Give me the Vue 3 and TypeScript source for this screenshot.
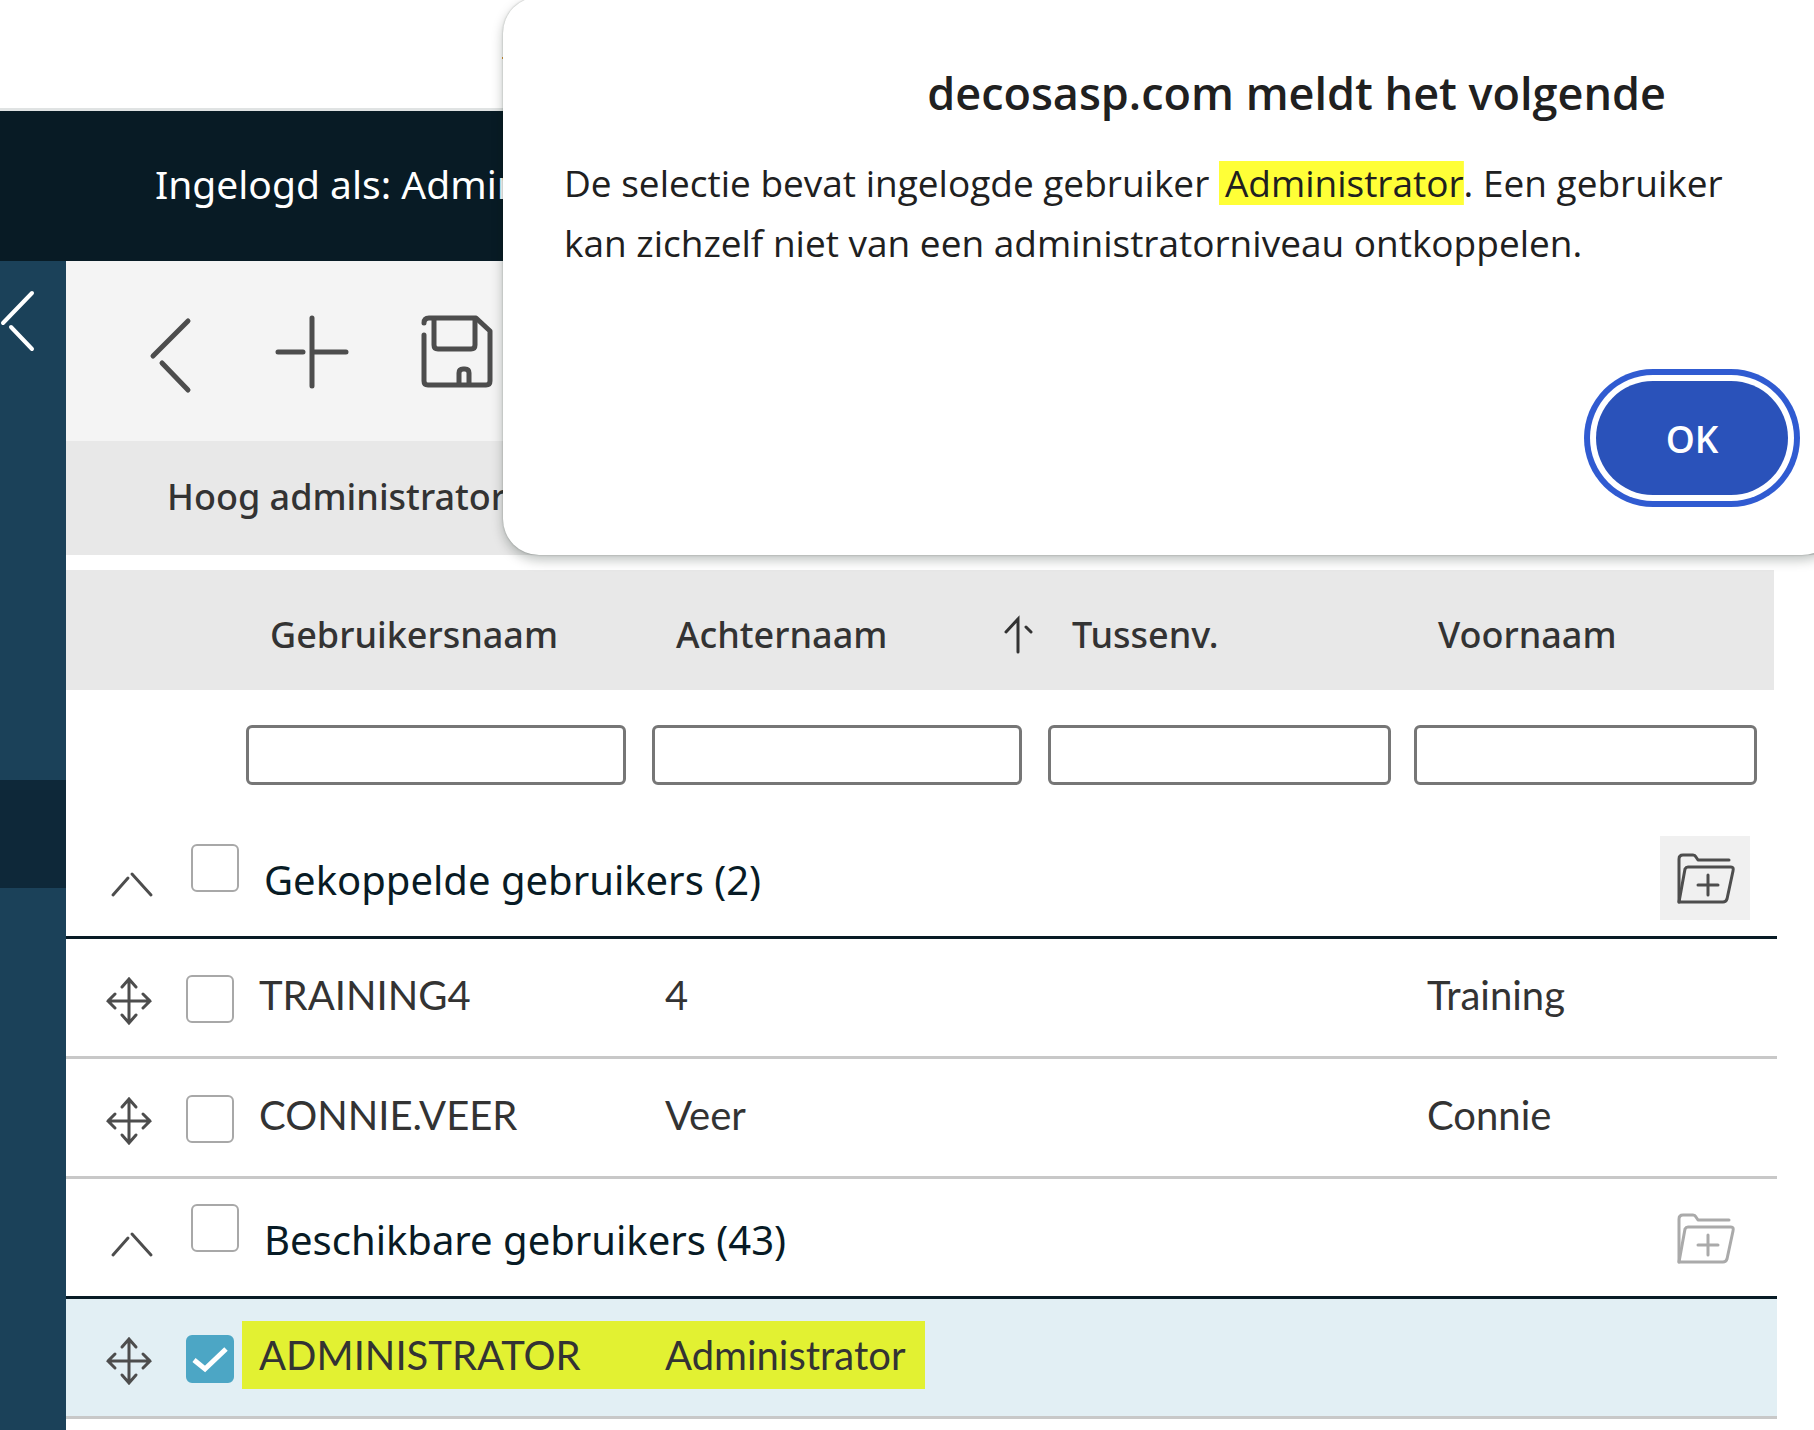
<script setup lang="ts">
import { reactive, ref } from 'vue'

interface User {
  login: string
  last: string
  infix: string
  first: string
  selected: boolean
}

interface Group {
  id: string
  title: string
  count: number
  open: boolean
  selected: boolean
  canLink: boolean
  users: User[]
}

const columns = [
  { key: 'login', label: 'Gebruikersnaam', sorted: false },
  { key: 'last', label: 'Achternaam', sorted: true },
  { key: 'infix', label: 'Tussenv.', sorted: false },
  { key: 'first', label: 'Voornaam', sorted: false },
]

const filters = reactive<Record<string, string>>({ login: '', last: '', infix: '', first: '' })

const groups = reactive<Group[]>([
  {
    id: 'linked',
    title: 'Gekoppelde gebruikers',
    count: 2,
    open: true,
    selected: false,
    canLink: true,
    users: [
      { login: 'TRAINING4', last: '4', infix: '', first: 'Training', selected: false },
      { login: 'CONNIE.VEER', last: 'Veer', infix: '', first: 'Connie', selected: false },
    ],
  },
  {
    id: 'available',
    title: 'Beschikbare gebruikers',
    count: 43,
    open: true,
    selected: false,
    canLink: false,
    users: [
      { login: 'ADMINISTRATOR', last: 'Administrator', infix: '', first: '', selected: true },
    ],
  },
])

const dialogOpen = ref(true)
</script>

<template>
  <div class="page">
    <header class="brand"><span class="brand-mark"></span></header>
    <div class="session">Ingelogd als: Admin</div>

    <div class="body">
      <nav class="sidebar" aria-label="Menu">
        <button class="collapse" type="button" aria-label="Menu inklappen">
          <svg width="40" height="64" viewBox="0 0 40 64" fill="none" stroke="#fff" stroke-width="4" stroke-linecap="round">
            <path d="M32 4 3 34M11 38l21 22" />
          </svg>
        </button>
        <a class="nav-active" href="#" aria-label="Gebruikers"></a>
      </nav>

      <main class="main">
        <div class="toolbar">
          <button type="button" aria-label="Terug">
            <svg width="50" height="80" viewBox="0 0 50 80" fill="none" stroke="#4d4d4d" stroke-width="5" stroke-linecap="round">
              <path d="M39 6 4 41M13 48l26 27" />
            </svg>
          </button>
          <button type="button" aria-label="Toevoegen">
            <svg width="70" height="80" viewBox="0 0 70 80" fill="none" stroke="#4d4d4d" stroke-width="5" stroke-linecap="round">
              <path d="M37 3v68M3 37h25M39 37h32" />
            </svg>
          </button>
          <button type="button" aria-label="Opslaan">
            <svg width="74" height="80" viewBox="0 0 74 80" fill="none" stroke="#4d4d4d" stroke-width="5" stroke-linecap="round" stroke-linejoin="round">
              <path d="M3 8q0-5 5-5h47l14 13v50q0 4-4 4H7q-4 0-4-4V20" />
              <path d="M13 4v26q0 4 4 4h33q4 0 4-4V4M38 69V58q0-4 4-4h2q4 0 4 4v11" />
            </svg>
          </button>
        </div>

        <h1 class="level">Hoog administrator</h1>

        <table class="users">
          <colgroup>
            <col class="c-lead" />
            <col class="c-login" />
            <col class="c-last" />
            <col class="c-infix" />
            <col />
          </colgroup>
          <thead>
            <tr>
              <th></th>
              <th v-for="c in columns" :key="c.key" scope="col" :aria-sort="c.sorted ? 'ascending' : undefined">
                <div class="head">
                  <span>{{ c.label }}</span>
                  <svg v-if="c.sorted" width="30" height="38" viewBox="0 0 30 38" fill="none" stroke="#333" stroke-width="3" stroke-linecap="round">
                    <path d="M15 37V4L3 17M23 12l5 5" />
                  </svg>
                </div>
              </th>
            </tr>
            <tr class="filters">
              <td></td>
              <td v-for="c in columns" :key="c.key">
                <input v-model="filters[c.key]" type="text" :aria-label="'Filter ' + c.label" />
              </td>
            </tr>
          </thead>
          <tbody v-for="g in groups" :key="g.id">
            <tr class="group">
              <th colspan="5" scope="rowgroup">
                <div class="group-bar">
                  <button class="fold" type="button" aria-label="In- of uitklappen" @click="g.open = !g.open">
                    <svg width="40" height="26" viewBox="0 0 40 26" fill="none" stroke="#4d4d4d" stroke-width="3" stroke-linecap="round">
                      <path d="M1 24 16 7M20 3l19 21" />
                    </svg>
                  </button>
                  <input :id="g.id" v-model="g.selected" class="box" type="checkbox" />
                  <label :for="g.id">{{ g.title }} ({{ g.count }})</label>
                  <button class="link" :class="{ ready: g.canLink }" type="button" aria-label="Koppelen">
                    <svg width="60" height="50" viewBox="0 0 60 50" fill="none" stroke="currentColor" stroke-width="3" stroke-linecap="round" stroke-linejoin="round">
                      <path d="M4 49V6q0-4 4-4h10q2 0 3 2l2 3h31" />
                      <path d="M4 49 10 16q1-2 3-2h43q3 0 2 4l-6 28q-1 3-4 3zM33 22v20M23 32h20" />
                    </svg>
                  </button>
                </div>
              </th>
            </tr>
            <template v-if="g.open">
              <tr v-for="u in g.users" :key="u.login" class="user" :class="{ selected: u.selected }">
                <td>
                  <div class="lead">
                    <svg width="44" height="52" viewBox="0 0 44 52" fill="none" stroke="#4d4d4d" stroke-width="3" stroke-linecap="round">
                      <path d="M22 5v42M1 26h42M15 12l7-8 7 8M15 40l7 8 7-8M8 19l-7 7 7 7M36 19l7 7-7 7" />
                    </svg>
                    <span class="tick">
                      <input v-model="u.selected" class="box" type="checkbox" :aria-label="u.login" />
                      <svg v-if="u.selected" width="48" height="48" viewBox="0 0 48 48" fill="none" stroke="#fff" stroke-width="5">
                        <path d="M8 25l11 9 21-20" />
                      </svg>
                    </span>
                  </div>
                </td>
                <td><span class="value first">{{ u.login }}</span></td>
                <td><span class="value fit">{{ u.last }}</span></td>
                <td><span class="value">{{ u.infix }}</span></td>
                <td><span class="value">{{ u.first }}</span></td>
              </tr>
            </template>
          </tbody>
        </table>
      </main>
    </div>

    <section v-if="dialogOpen" class="dialog" role="alertdialog" aria-labelledby="dlg-title" aria-describedby="dlg-text">
      <h2 id="dlg-title">decosasp.com meldt het volgende</h2>
      <p id="dlg-text">
        De selectie bevat ingelogde gebruiker <mark>Administrator</mark><span>. Een gebruiker</span>
        <span> kan zichzelf niet van een administratorniveau ontkoppelen.</span>
      </p>
      <button class="ok" type="button" @click="dialogOpen = false">OK</button>
    </section>
  </div>
</template>

<style>
body {
  margin: 0;
  background: #fff;
}
</style>

<style scoped>
.page {
  position: relative;
  display: flex;
  flex-direction: column;
  min-height: 100vh;
  overflow: hidden;
  font-family: 'Noto Sans', 'Open Sans', sans-serif;
  font-size: 39px;
  color: #333;
}
button {
  padding: 0;
  border: 0;
  background: none;
  font: inherit;
}
svg {
  display: block;
  overflow: visible;
}
.brand {
  box-sizing: border-box;
  height: 111px;
  padding: 57px 0 0 502px;
  border-bottom: 3px solid #e0e3e3;
}
.brand-mark {
  display: block;
  width: 12px;
  height: 2px;
  background: #d99a3c;
}
.session {
  height: 150px;
  padding-left: 155px;
  background: #081b25;
  color: #fff;
  line-height: 146px;
  white-space: nowrap;
}
.body {
  display: flex;
  flex: 1;
}
.sidebar {
  flex: none;
  width: 66px;
  background: #1b4159;
}
.collapse {
  display: block;
  height: 519px;
}
.collapse svg {
  margin-bottom: 400px;
}
.nav-active {
  display: block;
  height: 108px;
  background: #0e2839;
}
.main {
  flex: 1;
  min-width: 0;
}
.toolbar {
  box-sizing: border-box;
  display: flex;
  align-items: center;
  gap: 76px;
  height: 180px;
  padding: 8px 0 0 83px;
  background: #f4f4f4;
}
.level {
  height: 114px;
  margin: 0 0 15px;
  padding-left: 101px;
  background: #e8e8e8;
  font-size: 36px;
  font-weight: 500;
  line-height: 112px;
  white-space: nowrap;
}
.users {
  width: calc(100% - 37px);
  border-spacing: 0;
  table-layout: fixed;
  text-align: left;
}
.users th,
.users td {
  padding: 0;
}
.c-lead {
  width: 174px;
}
.c-login {
  width: 406px;
}
.c-last {
  width: 396px;
}
.c-infix {
  width: 366px;
}
thead th {
  background: #e8e8e8;
  font-size: 36px;
  font-weight: 500;
}
thead th:last-child {
  border-right: 3px solid #fff;
}
.head {
  display: flex;
  align-items: center;
  justify-content: space-between;
  height: 120px;
  padding: 8px 9px 0 30px;
  box-sizing: border-box;
}
.users .filters td {
  padding: 35px 20px 34px 6px;
}
.users .filters td:nth-child(4) {
  padding-right: 17px;
}
.filters input {
  display: block;
  box-sizing: border-box;
  width: 100%;
  height: 60px;
  padding: 0 12px;
  border: 3px solid #767676;
  border-radius: 6px;
  background: #fff;
  font: inherit;
}
.group th {
  border-bottom: 3px solid #081b25;
  color: #081b25;
  font-weight: 400;
}
.group-bar {
  display: flex;
  align-items: flex-start;
  height: 100px;
  padding: 17px 27px 0 46px;
}
.fold {
  display: flex;
  align-items: center;
  height: 96px;
  margin-right: 39px;
}
.box {
  appearance: none;
  box-sizing: border-box;
  width: 48px;
  height: 48px;
  margin: 0;
  border: 2px solid #a8a8a8;
  border-radius: 6px;
  background: #fff;
}
.box:checked {
  border-color: #4ca6c5;
  background: #4ca6c5;
}
.group-bar .box {
  margin: 8px 25px 0 0;
}
.group-bar label {
  flex: 1;
  font-size: 40px;
  line-height: 88px;
}
.link {
  display: flex;
  align-items: center;
  justify-content: center;
  width: 90px;
  height: 84px;
  color: #aaa;
}
.link.ready {
  background: #f0f0f0;
  color: #4d4d4d;
}
.user td {
  border-bottom: 3px solid #c8c8c8;
}
.lead {
  display: flex;
  gap: 35px;
  height: 81px;
  padding: 36px 0 0 41px;
}
.tick {
  display: grid;
  height: 48px;
}
.tick > * {
  grid-area: 1 / 1;
}
.tick svg {
  pointer-events: none;
}
.value {
  display: block;
  height: 68px;
  margin: 22px 0 27px;
  padding-left: 19px;
  font-family: Lato, 'Noto Sans', sans-serif;
  font-size: 40px;
  line-height: 68px;
}
.first {
  margin-left: 2px;
  padding-left: 17px;
}
.selected td {
  background: #e2eff4;
}
.selected .first,
.selected .fit {
  background: #e2f132;
}
.fit {
  width: fit-content;
  padding-right: 20px;
}
.dialog {
  position: absolute;
  top: -3px;
  left: 503px;
  right: -24px;
  box-sizing: border-box;
  height: 558px;
  padding: 58px 84px 0 61px;
  border-radius: 36px;
  background: #fff;
  box-shadow: 0 0 2px rgba(0, 20, 10, 0.3), 0 5px 12px rgba(0, 20, 10, 0.26);
  color: #202020;
  font-family: 'Open Sans', 'Noto Sans', sans-serif;
}
.dialog h2 {
  margin: 0;
  padding-right: 88px;
  font-size: 45px;
  font-weight: 600;
  line-height: 76px;
  text-align: right;
}
.dialog p {
  margin: 22px 0 0;
  font-size: 37px;
  line-height: 60px;
}
.dialog mark {
  padding-left: 6px;
  background: linear-gradient(#ffff37, #ffff37) center / 100% 44px no-repeat;
  color: inherit;
}
.ok {
  position: absolute;
  right: 50px;
  bottom: 60px;
  width: 192px;
  height: 114px;
  border-radius: 57px;
  background: #2a52ba;
  box-shadow: 0 0 0 6px #fff, 0 0 0 12px #305bd1;
  color: #fff;
  font-size: 37px;
  font-weight: 600;
}
</style>
